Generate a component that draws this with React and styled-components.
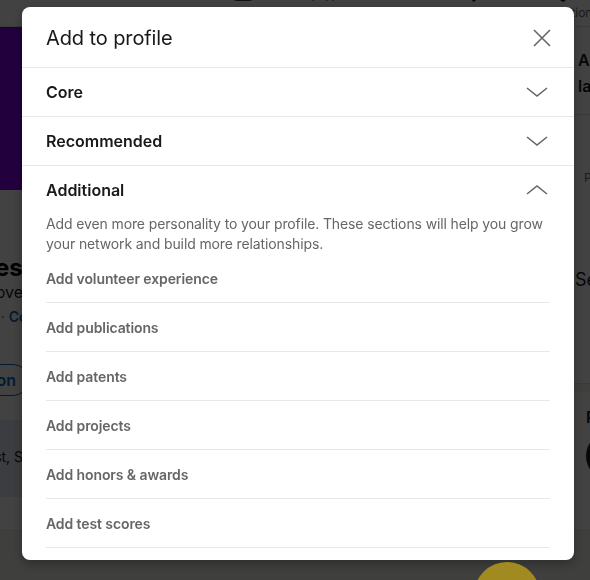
import React from 'react';
import styled, { createGlobalStyle } from 'styled-components';
import { Home, Users, Briefcase, MessageSquare, Bell } from 'lucide-react';

const GlobalStyle = createGlobalStyle`
  * { box-sizing: border-box; }
  body {
    margin: 0;
    background: #f3f2ef;
    font-family: Inter, "Noto Sans", sans-serif;
    overflow: hidden;
  }
`;

const Page = styled.div`
  width: 590px;
  height: 580px;
  overflow: hidden;
`;

const NavBar = styled.header`
  height: 27px;
  background: #fff;
  border-bottom: 1px solid #e0dfdc;
  display: flex;
  align-items: flex-end;
  padding-left: 203px;
  overflow: hidden;
`;

const NavItem = styled.div`
  width: 80px;
  flex-shrink: 0;
  display: flex;
  flex-direction: column;
  align-items: center;
  padding-bottom: 5px;
  color: #191919;
  font-size: 12px;
  line-height: 16px;

  svg {
    margin-bottom: 2px;
  }

  span {
    color: #666;
    white-space: nowrap;
  }
`;

/* page is scrolled sideways, so the main column starts left of the window */
const Layout = styled.main`
  display: flex;
  gap: 8px;
  margin-left: -208px;
`;

const ProfileColumn = styled.section`
  width: 766px;
  flex-shrink: 0;
  background: #fff;
  border-bottom: 1px solid #e0dfdc;
`;

const Banner = styled.div`
  height: 163px;
  background: #8200eb;
`;

const ProfileBody = styled.div`
  padding: 64px 24px 8px 24px;
`;

const Name = styled.h1`
  margin: 0;
  font-size: 24px;
  line-height: 28px;
  font-weight: 700;
  color: #000;
`;

const Headline = styled.p`
  margin: 0;
  font-size: 16px;
  line-height: 20px;
  color: #191919;
`;

const Location = styled.p`
  margin: 5px 0 0;
  font-size: 14px;
  line-height: 20px;
  color: #666;

  a {
    color: #0a66c2;
    font-weight: 600;
    text-decoration: none;
  }
`;

const ButtonRow = styled.div`
  display: flex;
  gap: 8px;
  margin-top: 37px;
`;

const PillButton = styled.button`
  height: 32px;
  padding: 0 12px;
  border-radius: 16px;
  border: 1px solid #0a66c2;
  background: #fff;
  color: #0a66c2;
  font-family: inherit;
  font-size: 16px;
  font-weight: 600;
`;

const OpenBox = styled.div`
  margin-top: 24px;
  height: 77px;
  border-radius: 8px;
  background: #e4ecf5;
  padding: 28px 16px;
  font-size: 14px;
  color: #191919;
`;

const Sidebar = styled.aside`
  width: 300px;
  flex-shrink: 0;
  display: flex;
  flex-direction: column;
  gap: 8px;
`;

const SideCard = styled.div`
  background: #fff;
  border-bottom: 1px solid #e0dfdc;
`;

const SideSection = styled.div`
  padding: ${(p) => p.$pad};
  border-bottom: ${(p) => (p.$divided ? '1px solid #e0dfdc' : 'none')};
  font-size: 16px;
  line-height: 26px;
  font-weight: 600;
  color: #191919;
`;

const SmallNote = styled.p`
  margin: 0 0 76px 6px;
  font-size: 12px;
  font-weight: 400;
  color: #666;
`;

const AdText = styled.p`
  margin: 0 0 0 -3px;
  font-size: 18px;
  font-weight: 400;
  color: #191919;
`;

const Avatar = styled.div`
  width: 48px;
  height: 48px;
  border-radius: 50%;
  background: #222;
  margin-top: 2px;
`;

const Overlay = styled.div`
  position: fixed;
  inset: 0;
  z-index: 10;
  background: rgba(0, 0, 0, 0.74);
  display: flex;
  align-items: flex-start;
  padding: 7px 0 0 22px;
`;

const Bubble = styled.div`
  position: fixed;
  z-index: 20;
  left: 474px;
  top: 562px;
  width: 66px;
  height: 66px;
  border-radius: 50%;
  background: #a18a20;
`;

const Modal = styled.div`
  width: 552px;
  height: 553px;
  background: #fff;
  border-radius: 8px;
  box-shadow: 0 4px 12px rgba(0, 0, 0, 0.3);
  overflow: hidden;
  display: flex;
  flex-direction: column;
`;

const ModalHeader = styled.div`
  height: 61px;
  flex-shrink: 0;
  display: flex;
  align-items: center;
  justify-content: space-between;
  padding: 1px 20px 0 24px;
  border-bottom: 1px solid #e8e8e8;
`;

const Title = styled.h2`
  margin: 0;
  font-size: 20px;
  font-weight: 400;
  color: #191919;
  letter-spacing: -0.1px;
`;

const IconButton = styled.button`
  width: 24px;
  height: 24px;
  padding: 0;
  border: none;
  background: none;
  color: #666;
  display: flex;
  align-items: center;
  justify-content: center;
`;

const Section = styled.div`
  border-bottom: ${(p) => (p.$last ? 'none' : '1px solid #e8e8e8')};
`;

const SectionHead = styled.div`
  height: 48px;
  display: flex;
  align-items: center;
  justify-content: space-between;
  padding: 0 26px 0 24px;
  font-size: 16px;
  font-weight: 600;
  color: #191919;
`;

const Description = styled.p`
  margin: 0;
  padding: 0 20px 0 24px;
  font-size: 14px;
  line-height: 20px;
  letter-spacing: -0.12px;
  color: #666;
`;

const ItemList = styled.ul`
  list-style: none;
  margin: 0 24px;
  padding: 0;
`;

const Item = styled.li`
  height: 49px;
  display: flex;
  align-items: center;
  border-bottom: 1px solid #e8e8e8;
  font-size: 14px;
  font-weight: 600;
  letter-spacing: -0.1px;
  color: #666;
`;

const Chevron = ({ up }) => (
  <svg width="22" height="12" viewBox="0 0 22 12" fill="none">
    <polyline
      points={up ? '1,10 11,2 21,10' : '1,2 11,10 21,2'}
      stroke="#666"
      strokeWidth="1.6"
      strokeLinejoin="miter"
    />
  </svg>
);

const CloseIcon = () => (
  <svg width="24" height="24" viewBox="0 0 24 24" fill="none">
    <path d="M4 4L20 20M20 4L4 20" stroke="#666" strokeWidth="1.6" />
  </svg>
);

const navItems = [
  { icon: Home, label: 'Home' },
  { icon: Users, label: 'My Network' },
  { icon: Briefcase, label: 'Jobs' },
  { icon: MessageSquare, label: 'Messaging' },
  { icon: Bell, label: 'Notifications' },
];

const additional = [
  'Add volunteer experience',
  'Add publications',
  'Add patents',
  'Add projects',
  'Add honors & awards',
  'Add test scores',
];

const App = () => (
  <Page>
    <GlobalStyle />
    <NavBar>
      {navItems.map(({ icon: Icon, label }) => (
        <NavItem key={label}>
          <Icon size={24} fill="currentColor" strokeWidth={1.5} />
          <span>{label}</span>
        </NavItem>
      ))}
    </NavBar>
    <Layout>
      <ProfileColumn>
        <Banner />
        <ProfileBody>
          <Name>Jonathan Hughes</Name>
          <Headline>Product designer and I love it</Headline>
          <Location>
            Boston, Massachusetts, US · <a href="#contact">Contact info</a>
          </Location>
          <ButtonRow>
            <PillButton>Open to</PillButton>
            <PillButton>Add section</PillButton>
            <PillButton>More</PillButton>
          </ButtonRow>
          <OpenBox>Open to work · UX Analyst, Senior Designer</OpenBox>
        </ProfileBody>
      </ProfileColumn>
      <Sidebar>
        <SideCard>
          <SideSection $pad="20px 12px 15px" $divided>
            Add profile in another
            <br />
            language
          </SideSection>
          <SideSection $pad="50px 12px 90px">
            <SmallNote>Promoted</SmallNote>
            <AdText>See who's hiring</AdText>
          </SideSection>
        </SideCard>
        <SideCard>
          <SideSection $pad="12px 20px 50px">
            People also viewed
            <Avatar />
          </SideSection>
        </SideCard>
      </Sidebar>
    </Layout>

    <Overlay>
      <Modal role="dialog" aria-label="Add to profile">
        <ModalHeader>
          <Title>Add to profile</Title>
          <IconButton aria-label="Dismiss">
            <CloseIcon />
          </IconButton>
        </ModalHeader>
        <Section>
          <SectionHead>
            Core
            <Chevron />
          </SectionHead>
        </Section>
        <Section>
          <SectionHead>
            Recommended
            <Chevron />
          </SectionHead>
        </Section>
        <Section $last>
          <SectionHead>
            Additional
            <Chevron up />
          </SectionHead>
          <Description>
            Add even more personality to your profile. These sections will help you grow
            your network and build more relationships.
          </Description>
          <ItemList>
            {additional.map((label) => (
              <Item key={label}>{label}</Item>
            ))}
          </ItemList>
        </Section>
      </Modal>
    </Overlay>
    <Bubble />
  </Page>
);

export default App;
